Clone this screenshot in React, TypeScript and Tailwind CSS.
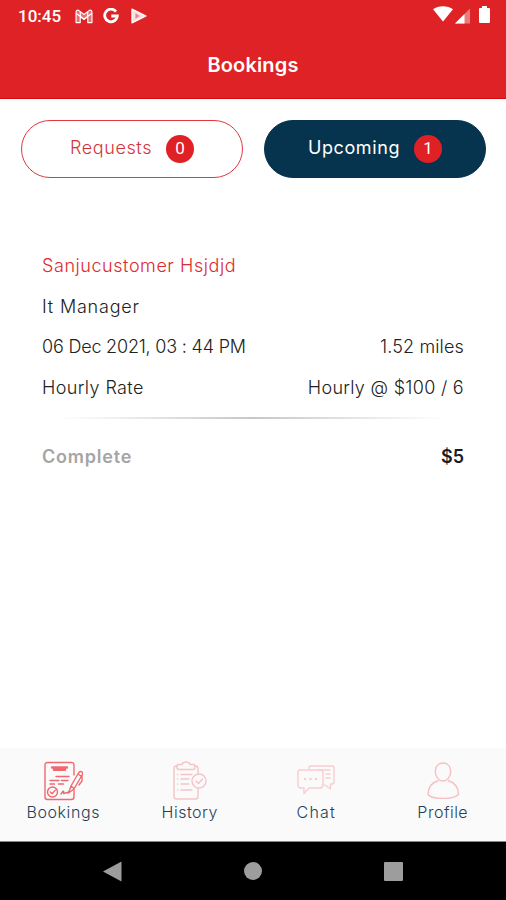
import clsx from "clsx"
import { ReactNode } from "react"

interface ITab {
  label: string
  count: number
  active?: boolean
  labelClass: string
}

interface IRow {
  left: string
  right?: string
  leftClass: string
  rightClass?: string
}

const rows: IRow[] = [
  { left: "Sanjucustomer Hsjdjd", leftClass: "text-[#dc2a30] tracking-[0.56px]" },
  { left: "It Manager", leftClass: "tracking-[0.8px]" },
  {
    left: "06 Dec 2021, 03 : 44 PM",
    leftClass: "tracking-[-0.2px]",
    right: "1.52 miles",
    rightClass: "tracking-[0.15px]",
  },
  {
    left: "Hourly Rate",
    leftClass: "tracking-[0.4px]",
    right: "Hourly @ $100 / 6",
    rightClass: "tracking-[0.3px]",
  },
]

function StatusBar() {
  return (
    <div className="flex h-8 items-center pl-[18px] pr-4 text-white">
      <span className="font-[Roboto,sans-serif] text-[17px] font-medium leading-none">10:45</span>
      <svg className="ml-[13px]" width="20" height="15" viewBox="0 0 20 16" fill="none" stroke="#fff" strokeWidth="1.200" strokeLinejoin="round">
        <path d="M1.500 14.500V3.200C1.500 1 3.600.8 5 2l5 3.900L15 2c1.400-1.200 3.500-1 3.500 1.200v11.300H14V8l-4 3-4-3v6.500z" fill="#fff" fillOpacity=".35" />
        <path d="M6 3v5M14 3v5M1.500 4.500 10 11l8.500-6.500" />
      </svg>
      <svg className="ml-[9px]" width="16" height="16" viewBox="0 0 16 16" fill="none" stroke="#fff" strokeWidth="2.800">
        <path d="M13 3.600A6.300 6.300 0 1 0 14.300 8H8.300" />
      </svg>
      <svg className="ml-3" width="16" height="16" viewBox="0 0 16 16">
        <path d="M1 1.200v13.600L15 8z" fill="#fff" fillOpacity=".85" stroke="#fff" strokeWidth="1.300" strokeLinejoin="round" />
        <path d="M4.500 5.200v5.600L8.500 8z" fill="#df2226" fillOpacity=".5" />
      </svg>
      <svg className="-mt-1 ml-auto" width="20" height="16" viewBox="0 0 20 16" fill="#fff">
        <path d="M0 3.300C5.500-.9 14.500-.9 20 3.300L10 15.500z" />
      </svg>
      <svg className="-mt-px ml-[2px]" width="16" height="16" viewBox="0 0 16 16" fill="#fff">
        <path d="M15 .5v15H0z" fillOpacity=".4" />
        <path d="M9.500 6v9.500H0z" />
      </svg>
      <svg className="-mt-[3px] ml-2" width="11" height="17" viewBox="0 0 11 17" fill="#fff">
        <path d="M3 0h5v2h2q1 0 1 1v13q0 1-1 1H1q-1 0-1-1V3q0-1 1-1h2z" />
      </svg>
    </div>
  )
}

function Tab({ label, count, active, labelClass }: ITab) {
  return (
    <button
      className={clsx(
        "flex h-[58px] w-[222px] items-center justify-center gap-[14px] rounded-full border text-[18px]",
        active ? "border-[#06344f] bg-[#06344f] text-white" : "border-[#df3a3f] bg-white text-[#d6343b]",
      )}
    >
      <span className={clsx("-mt-[3px] whitespace-nowrap", labelClass)}>{label}</span>
      <span className="flex size-7 items-center justify-center rounded-full bg-[#df2024] font-[Roboto,sans-serif] text-[17px] text-white">
        {count}
      </span>
    </button>
  )
}

function BookingsIcon() {
  return (
    <svg width="40" height="40" viewBox="0 0 40 40" fill="none" stroke="#ee6a6f" strokeWidth="1.400" strokeLinecap="round" strokeLinejoin="round">
      <path d="M31 14V4q0-2.500-2.500-2.500H4.500Q2 1.500 2 4v32q0 2.500 2.500 2.500h24Q31 38.500 31 36v-7" />
      <path d="M9 6.500h15M11 8.800h11" strokeWidth="2.400" />
      <path d="M13 15.500h13M7 19.500h9m2.500 0H25M7 23h4.500m4 0h5" />
      <circle cx="9.500" cy="31" r="5" />
      <path d="m7.300 31 1.800 1.800 3.200-3.700" />
      <path d="M18 33c2-3 3-4 2.500-1.500S22 31 23.500 32t2-1" />
      <path d="M25.500 32 28 25l7.500-13q2-2.500 3.500-1t-.5 4L31 28z M35 13l3 2M28 25l3 2.500M39 15v5l-3 4" />
    </svg>
  )
}

function HistoryIcon() {
  return (
    <svg width="40" height="40" viewBox="0 0 40 40" fill="none" stroke="#f6c3c7" strokeWidth="1.400" strokeLinecap="round" strokeLinejoin="round">
      <path d="M7 5H6.500Q4 5 4 7.500v28Q4 38 6.500 38h19q2.500 0 2.500-2.500V28M25 5h.5Q28 5 28 7.500V13" />
      <path d="M9 3.500h3Q12.500 1 16 1t4 2.500h3q2 0 2 2v1q0 2-2 2H9q-2 0-2-2v-1q0-2 2-2z" />
      <path d="M11 13.500h11M11 18h8M11 23h8M11 29h11M7.500 13.500h.1M7.500 18h.1M7.500 23h.1M7.500 29h.1" />
      <circle cx="29" cy="20" r="7" />
      <path d="m26 20 2.500 2.500 4-4.500" />
    </svg>
  )
}

function ChatIcon() {
  return (
    <svg width="40" height="40" viewBox="0 0 40 40" fill="none" stroke="#f8cdd1" strokeWidth="1.400" strokeLinecap="round" strokeLinejoin="round">
      <path d="M13 8V7q0-2 2-2h21q2 0 2 2v14q0 2-2 2h-1.500v5L29 24" />
      <path d="M4 9h20q3 0 3 3v12q0 3-3 3H13l-5 5.500V27H5q-3 0-3-3V11q0-2 2-2z" />
      <path d="M23 9h11M30 13h4M30 17h4" />
      <path d="M9 18h.1M14.500 18h.1M20 18h.1" strokeWidth="2.400" />
    </svg>
  )
}

function ProfileIcon() {
  return (
    <svg width="40" height="40" viewBox="0 0 40 40" fill="none" stroke="#f6bfc4" strokeWidth="1.400" strokeLinejoin="round">
      <path d="M20 2c5 0 7.700 3.500 7.700 8.500S24.500 20 20 20s-7.700-4.500-7.700-9.500S15 2 20 2z" />
      <path d="M15.500 19.500C9 21.500 5 25.500 5 33.500c4 5.200 26 5.200 30.500 0 0-8-4-12-10.500-14" />
    </svg>
  )
}

function NavItem({ icon, label, labelClass }: { icon: ReactNode; label: string; labelClass: string }) {
  return (
    <button className="flex flex-1 flex-col items-center pt-[13px] text-[16px] font-light leading-[22px] text-[#263f59]">
      {icon}
      <span className={clsx("whitespace-nowrap", labelClass)}>{label}</span>
    </button>
  )
}

function App() {
  return (
    <div className="flex h-[900px] w-[506px] flex-col overflow-hidden bg-white font-[Inter,sans-serif]">
      <header className="h-[99px] border-b border-[#d3090e] bg-[#df2226]">
        <StatusBar />
        <h1 className="pt-[19px] text-center text-[20px] font-semibold leading-[28px] tracking-[0.15px] text-white">
          Bookings
        </h1>
      </header>

      <main className="flex-1">
        <div className="flex justify-between pl-[21px] pr-5 pt-[21px]">
          <Tab label="Requests" count={0} labelClass="font-light tracking-[0.6px]" />
          <Tab label="Upcoming" count={1} active labelClass="tracking-[0.6px]" />
        </div>

        <section className="px-[42px] pt-[67px] text-[18px] font-light text-[#222]">
          {rows.map((row) => (
            <div key={row.left} className="flex h-[40.8px] items-center justify-between whitespace-nowrap">
              <span className={row.leftClass}>{row.left}</span>
              {row.right && <span className={row.rightClass}>{row.right}</span>}
            </div>
          ))}
          <div className="mx-[18px] mt-[9px] h-[2px] bg-linear-to-r from-transparent via-[#c4c8c9] to-transparent" />
          <div className="flex h-[75px] items-center justify-between font-semibold">
            <span className="tracking-[0.8px] text-[#a5a5a5]">Complete</span>
            <span className="text-[#1c1c1c]">$5</span>
          </div>
        </section>
      </main>

      <nav className="flex h-[94px] border-b border-[#888] bg-[#fafafa]">
        <NavItem icon={<BookingsIcon />} label="Bookings" labelClass="tracking-[0.6px]" />
        <NavItem icon={<HistoryIcon />} label="History" labelClass="tracking-[0.5px]" />
        <NavItem icon={<ChatIcon />} label="Chat" labelClass="tracking-[1.2px]" />
        <NavItem icon={<ProfileIcon />} label="Profile" labelClass="tracking-[0.5px]" />
      </nav>

      <div className="flex h-[58px] items-center justify-between bg-black px-[103px]">
        <svg width="19" height="21" viewBox="0 0 19 21" fill="#9d9d9d">
          <path d="M18.500.5v20L0 10.500z" />
        </svg>
        <span className="size-[18px] rounded-full bg-[#9d9d9d]" />
        <span className="size-[19px] rounded-[1px] bg-[#9d9d9d]" />
      </div>
    </div>
  )
}

export default App
